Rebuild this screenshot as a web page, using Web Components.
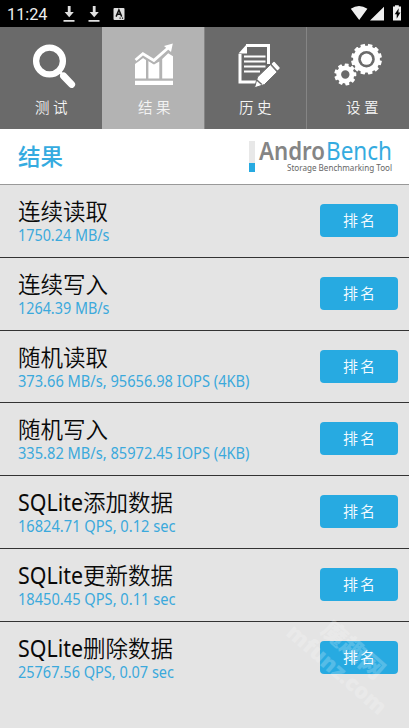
<!DOCTYPE html>
<html lang="zh-CN">
<head>
<meta charset="utf-8">
<meta name="viewport" content="width=device-width">
<title>AndroBench</title>
<style>
html,body{margin:0;height:100%;overflow:hidden;background:#e4e4e4}
body{font-family:"Noto Sans","Noto Sans CJK SC",sans-serif}
</style>
</head>
<body>
<bench-app></bench-app>
<script>
const define = (name, render) => customElements.define(name, class extends HTMLElement {
  constructor() { super(); this.attachShadow({mode: 'open'}); }
  connectedCallback() { this.shadowRoot.innerHTML = render(this); }
});

/* One line of text fitted to a given width. */
define('fit-text', el => {
  const a = n => el.getAttribute(n);
  return `<style>:host{display:block}svg{display:block;overflow:visible}</style>
  <svg width="${a('w')}" height="${a('h')}"><text x="0" y="${a('base')}" font-size="${a('size')}" font-weight="${a('weight') || 400}" textLength="${a('w')}" lengthAdjust="spacingAndGlyphs" fill="currentColor">${el.textContent}</text></svg>`;
});

define('status-bar', () => `<style>
:host{display:flex;height:27px;background:#000;color:#eee;justify-content:space-between}
fit-text{font-family:Roboto,sans-serif;padding-left:7px}
.left{display:flex}svg{display:block}
</style>
<div class="left"><fit-text w="40.5" h="27" base="19.8" size="16.3">11:24</fit-text>
<svg width="85" height="27" viewBox="47.5 0 85 27" fill="#e0e0e0">
<path d="M67.3 6h2.8v6h3.2l-4.6 5.3-4.6-5.3h3.2zM63 20h11v1.8H63z"/><path transform="translate(25)" d="M67.3 6h2.8v6h3.2l-4.6 5.3-4.6-5.3h3.2zM63 20h11v1.8H63z"/>
<rect x="113" y="8" width="11" height="12" rx="1"/><path d="M115.6 16.6l2.8-6.6 2.8 6.6M116.8 14.3h3.2" fill="none" stroke="#111" stroke-width="1.5"/><path d="M119 17.5h1.2v1.2H119zM121.4 17.5h1.2v1.2h-1.2z" fill="#111"/></svg></div>
<svg width="64" height="27" viewBox="345 0 64 27" fill="#eee"><path d="M350.8 8.8Q359 3 367.4 8.8L359.2 20zM384 6.8V20.5h-14zM393 8V6.6h2V5.2h3.8v1.4h2.2V20.5H393z"/><path d="M398.7 8.2l-4 6h2v4.6l3.7-6.2h-2z" fill="#000"/></svg>`);

/* Toothed ring built from a rotated tooth. */
const gear = (x, y, r, n, hole, t, dot, phase = 0) => {
  let s = '';
  for (let i = 0; i < n; i++) s += `<rect x="${-t/2}" y="${-r}" width="${t}" height="5" rx=".6" transform="rotate(${i*360/n+phase})"/>`;
  const body = r - 2, mid = (body + hole) / 2;
  return `<g transform="translate(${x} ${y})">${s}<circle r="${mid}" fill="none" stroke="#fff" stroke-width="${body-hole}"/>${dot ? `<circle r="${dot}"/>` : ''}</g>`;
};
const icons = {
  search: `<circle cx="49.500" cy="61" r="13.4" fill="none" stroke="#fff" stroke-width="6.3"/><path d="M59.8 72l3 3" stroke="#fff" stroke-width="3"/><path d="M63.6 76l8 8.4" stroke="#fff" stroke-width="7" stroke-linecap="round"/>`,
  chart: `<path d="M135 80.8h38v4.2h-38zM135 64l8-6 3 2v18.4h-11zM148.4 61l5.5 3.5 5.4-3V78.400h-10.900zM162.2 59l6-5.8 4.8 3V78.400h-10.800z"/><path d="M135.5 60l7.400-5.700 11 6.600 15-13.500" fill="none" stroke="#b3b3b3" stroke-width="5.500"/><path d="M135.5 60l7.400-6.200 11 6.600 15-13.200" fill="none" stroke="#fff" stroke-width="2.800"/><path d="M164 46L172.800 43.500 171 52z"/>`,
  history: `<path d="M246 45.500H268.500V64M261 82H240V54" fill="none" stroke="#fff" stroke-width="3"/><path d="M238.500 53.500L247 44V53.500z"/><path d="M244 56.500h21.500M244 61.500h21.500M244 66.500h21.500M244 71.500h16" stroke="#fff" stroke-width="1.900"/><path d="M254.500 87.800L257.500 77 270.400 64.600 277.200 72 264.500 84.500z" stroke="#6a6a6a" stroke-width="1"/><path d="M256.800 80l5 4.500" stroke="#6a6a6a" stroke-width="1.500"/><path d="M272.500 64l1.500-1.500 5 5.500-1.500 1.500z" stroke="#fff" stroke-width="1.500" stroke-linejoin="round"/>`,
  settings: gear(366.5, 59.2, 15.4, 12, 8.300, 4.600, 5.600, 15) + gear(345.3, 74.5, 11, 9, 4.200, 4, 0, 8)
};
define('nav-tab', el => `<style>
:host{display:block;height:102px;background:#6a6a6a;color:#f4f4f4;box-sizing:border-box}
:host([selected]){background:#b3b3b3}
:host([divided]){box-shadow:inset 1px 0 #858585}
svg{display:block}
.label{display:flex;gap:3.500px;padding-left:${el.getAttribute('inset')}px;margin-top:5px}
fit-text{font-family:"Noto Sans CJK SC",sans-serif}
</style><svg width="102" height="64" viewBox="${el.getAttribute('origin')} 27 102 64" fill="#fff">${icons[el.getAttribute('icon')]}</svg>
<div class="label">${[...el.textContent].map(c => `<fit-text w="14.5" h="22" base="16.500" size="14.800" weight="350">${c}</fit-text>`).join('')}</div>`);

define('brand-logo', () => `<style>
:host{display:flex;gap:3.500px;height:31px}
.bar{width:6px;background:linear-gradient(#e8e8e8 0 22px,#27aae1 22px)}
.name{display:flex;gap:1px;color:#858585}.name :last-child{color:#35abe0}
.sub{padding-left:28px;color:#666}
</style><div class="bar"></div><div><div class="name"><fit-text w="66" h="22" base="18.800" size="25" weight="600">Andro</fit-text><fit-text w="66" h="22" base="18.800" size="25">Bench</fit-text></div><div class="sub"><fit-text w="105" h="9" base="7.500" size="9">Storage Benchmarking Tool</fit-text></div></div>`);

define('page-header', el => `<style>
:host{display:flex;justify-content:space-between;height:55px;background:#fff;border-bottom:1px solid #999;padding:0 17.500px 0 18px;color:#35abe0}
fit-text{font-family:"Noto Sans CJK SC",sans-serif}
brand-logo{margin-top:12px}
</style><fit-text w="45" h="55" base="35.800" size="23" weight="500">${el.textContent}</fit-text><brand-logo></brand-logo>`);

define('rank-button', () => `<style>
:host{display:flex;justify-content:center;gap:2.500px;width:78px;height:33px;border-radius:4px;background:#27aae1;color:#f5fbff;font-family:"Noto Sans CJK SC",sans-serif}
</style><fit-text w="15" h="33" base="21.500" size="15" weight="350">排</fit-text><fit-text w="15" h="33" base="21.500" size="15" weight="350">名</fit-text>`);

define('result-row', el => {
  const a = n => el.getAttribute(n);
  return `<style>
:host{display:flex;justify-content:space-between;height:72.8px;box-sizing:border-box;border-bottom:1px solid #333;padding:0 11px 0 18px;color:#0a0a0a}
:host(:last-child){border:0}
.title{display:flex;font-family:"Noto Sans CJK SC",sans-serif}
.latin{font-family:"Noto Sans",sans-serif}
.value{color:#3ba9dc}
rank-button{margin-top:19px}
</style><div><div class="title">${a('latin') ? `<fit-text class="latin" w="65" h="41" base="34.800" size="22.700">${a('latin')}</fit-text>` : ''}<fit-text w="90" h="41" base="34.600" size="22.800" weight="350">${a('name')}</fit-text></div>
<fit-text class="value" w="${a('value-width')}" h="22" base="15.300" size="15.500">${el.textContent}</fit-text></div><rank-button></rank-button>`;
});

define('site-watermark', () => `<style>
:host{position:absolute;left:0;top:0;width:409px;height:728px;pointer-events:none;color:#fff;opacity:.21;font-family:"Open Sans","Noto Sans CJK SC",sans-serif}
.a,.b{position:absolute;transform-origin:0 50%;transform:rotate(41deg)}
.a{left:325px;top:612px}.b{left:289px;top:617px}
</style><div class="a"><fit-text w="74" h="28" base="22" size="24" weight="800">魔趣网</fit-text></div><div class="b"><fit-text w="124" h="26" base="19" size="22" weight="800">mfunz.com</fit-text></div>`);

define('bench-app', () => `<style>
:host{display:block;position:relative;width:409px;height:728px;overflow:hidden;background:#e4e4e4}
nav{display:grid;grid-template-columns:102px 102px 102px 103px}
</style><status-bar></status-bar>
<nav><nav-tab icon="search" origin="0" inset="34.500">测试</nav-tab><nav-tab icon="chart" origin="102" inset="36" selected>结果</nav-tab><nav-tab icon="history" origin="204" inset="35" divided>历史</nav-tab><nav-tab icon="settings" origin="306" inset="40" divided>设置</nav-tab></nav>
<page-header>结果</page-header>
<main>
<result-row name="连续读取" value-width="91.500">1750.24 MB/s</result-row>
<result-row name="连续写入" value-width="91.500">1264.39 MB/s</result-row>
<result-row name="随机读取" value-width="231.500">373.66 MB/s, 95656.98 IOPS (4KB)</result-row>
<result-row name="随机写入" value-width="231.500">335.82 MB/s, 85972.45 IOPS (4KB)</result-row>
<result-row latin="SQLite" name="添加数据" value-width="157.500">16824.71 QPS, 0.12 sec</result-row>
<result-row latin="SQLite" name="更新数据" value-width="157.500">18450.45 QPS, 0.11 sec</result-row>
<result-row latin="SQLite" name="删除数据" value-width="156">25767.56 QPS, 0.07 sec</result-row>
</main><site-watermark></site-watermark>`);
</script>
</body>
</html>
